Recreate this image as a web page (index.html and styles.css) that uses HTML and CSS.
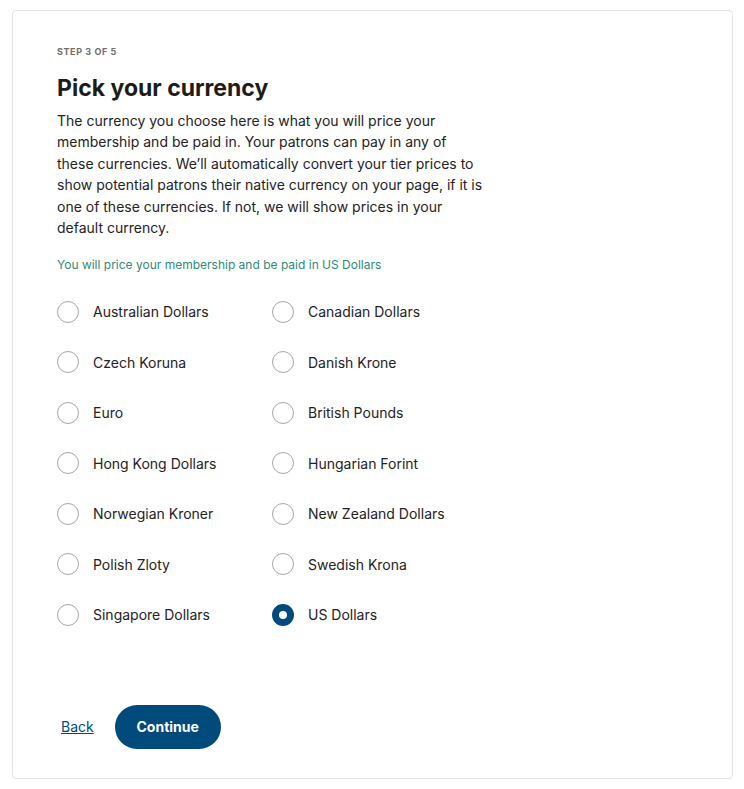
FILE: index.html
```html
<!doctype html>
<html>
	<head>
		<link rel="stylesheet" href="styles.css">
	</head>
	<body>
		<div class="card">
			<p class="step">Step 3 of 5</p>
			<h1 class="title">Pick your currency</h1>
			<p class="intro">The currency you choose here is what you will price your membership and be paid in. Your patrons can pay in any of these currencies. We’ll automatically convert your tier prices to show potential patrons their native currency on your page, if it is one of these currencies. If not, we will show prices in your default currency.</p>
			<p class="note">You will price your membership and be paid in US Dollars</p>
			<div class="options">
				<label class="option"><input type="radio" name="currency" value="AUD"><span>Australian Dollars</span></label>
				<label class="option"><input type="radio" name="currency" value="CAD"><span>Canadian Dollars</span></label>
				<label class="option"><input type="radio" name="currency" value="CZK"><span>Czech Koruna</span></label>
				<label class="option"><input type="radio" name="currency" value="DKK"><span>Danish Krone</span></label>
				<label class="option"><input type="radio" name="currency" value="EUR"><span>Euro</span></label>
				<label class="option"><input type="radio" name="currency" value="GBP"><span>British Pounds</span></label>
				<label class="option"><input type="radio" name="currency" value="HKD"><span>Hong Kong Dollars</span></label>
				<label class="option"><input type="radio" name="currency" value="HUF"><span>Hungarian Forint</span></label>
				<label class="option"><input type="radio" name="currency" value="NOK"><span>Norwegian Kroner</span></label>
				<label class="option"><input type="radio" name="currency" value="NZD"><span>New Zealand Dollars</span></label>
				<label class="option"><input type="radio" name="currency" value="PLN"><span>Polish Zloty</span></label>
				<label class="option"><input type="radio" name="currency" value="SEK"><span>Swedish Krona</span></label>
				<label class="option"><input type="radio" name="currency" value="SGD"><span>Singapore Dollars</span></label>
				<label class="option"><input type="radio" name="currency" value="USD" checked><span>US Dollars</span></label>
			</div>
			<div class="actions">
				<a class="back" href="#">Back</a>
				<button class="continue">Continue</button>
			</div>
		</div>
	</body>
</html>
```

FILE: styles.css
```css
body
{
	margin: 0;
	padding: 10px 12px 0 12px;
	font-family: Inter, "Noto Sans", sans-serif;
	color: #24221f;
	background-color: #ffffff;
}

.card
{
	box-sizing: border-box;
	width: 721px;
	height: 769px;
	border: 1px solid #e5e3dd;
	border-radius: 4px;
	padding: 35px 44px 0 44px;
}

.step
{
	margin: 0;
	font-size: 9px;
	line-height: 12px;
	font-weight: 700;
	letter-spacing: 0.6px;
	text-transform: uppercase;
	color: #706f6b;
}

.title
{
	margin: 14px 0 6px 0;
	font-size: 23px;
	line-height: 32px;
	font-weight: 700;
	color: #1e1c19;
}

.intro
{
	margin: 0;
	max-width: 427px;
	font-size: 14px;
	line-height: 21.4px;
}

.note
{
	margin: 18px 0 0 0;
	font-size: 12px;
	line-height: 18px;
	color: #2f8a7b;
}

.options
{
	display: grid;
	grid-template-columns: 215px 215px;
	grid-auto-rows: 50.5px;
	margin-top: 12px;
}

.option
{
	display: flex;
	align-items: center;
	gap: 14px;
	font-size: 14px;
	cursor: pointer;
}

.option input
{
	appearance: none;
	margin: 0;
	width: 22px;
	height: 22px;
	border: 1px solid #a9a7a1;
	border-radius: 50%;
	background-color: #ffffff;
}

.option input:checked
{
	border: 7.5px solid #004a7c;
}

.actions
{
	display: flex;
	align-items: center;
	gap: 21px;
	margin-top: 65px;
}

.back
{
	margin-left: 4px;
	font-size: 14px;
	color: #004a7c;
	text-decoration: underline;
}

.continue
{
	height: 44px;
	width: 106px;
	border: none;
	border-radius: 22px;
	background-color: #004a7c;
	color: #ffffff;
	font-family: Inter, "Noto Sans", sans-serif;
	font-size: 14px;
	font-weight: 700;
}
```
